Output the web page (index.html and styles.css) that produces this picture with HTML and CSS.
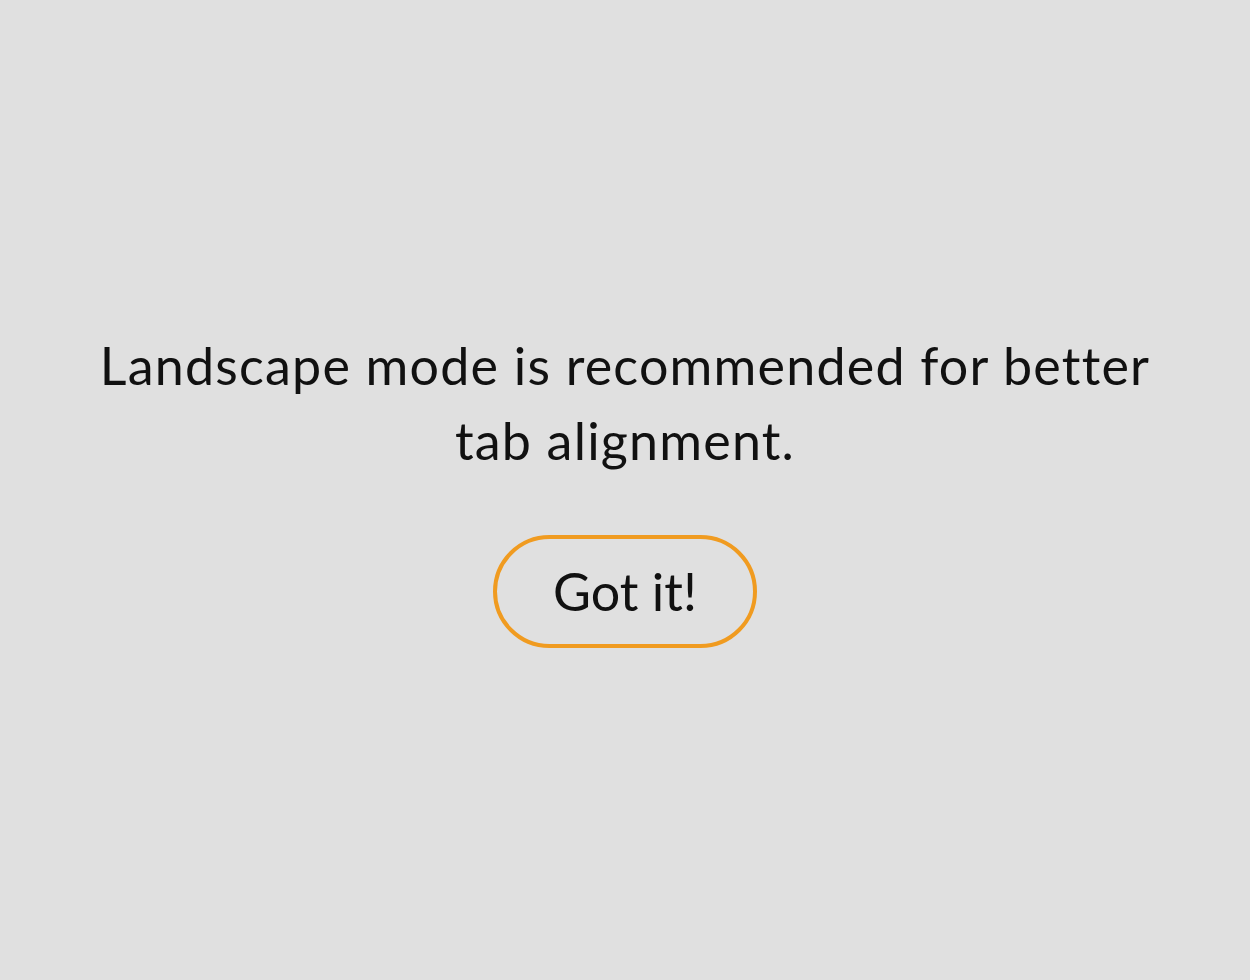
FILE: index.html
```html
<!DOCTYPE html>
<html lang="en">
<head>
    <meta charset="UTF-8">
    <title>Rotate notice</title>
    <link rel="stylesheet" href="styles.css">
</head>
<body>
    <div class="notice">
        <p class="notice-text">Landscape mode is recommended for better tab alignment.</p>
        <button class="notice-btn">Got it!</button>
    </div>
</body>
</html>
```

FILE: styles.css
```css
html, body {
    margin: 0;
    height: 100%;
}

body {
    font-family: "Lato", "Noto Sans", sans-serif;
    background-color: #e0e0e0;
    color: #111;
}

.notice {
    height: 100%;
    display: flex;
    flex-direction: column;
    align-items: center;
    justify-content: center;
    padding: 0 80px 4px;
    box-sizing: border-box;
}

.notice-text {
    margin: 0;
    font-size: 52px;
    letter-spacing: 1.2px;
    line-height: 75px;
    text-align: center;
    max-width: 1070px;
}

.notice-btn {
    margin-top: 57px;
    font-family: inherit;
    font-size: 52px;
    line-height: 73px;
    color: #111;
    background: transparent;
    border: 4px solid #f09b20;
    border-radius: 60px;
    padding: 16px 56px;
    cursor: pointer;
}
```
